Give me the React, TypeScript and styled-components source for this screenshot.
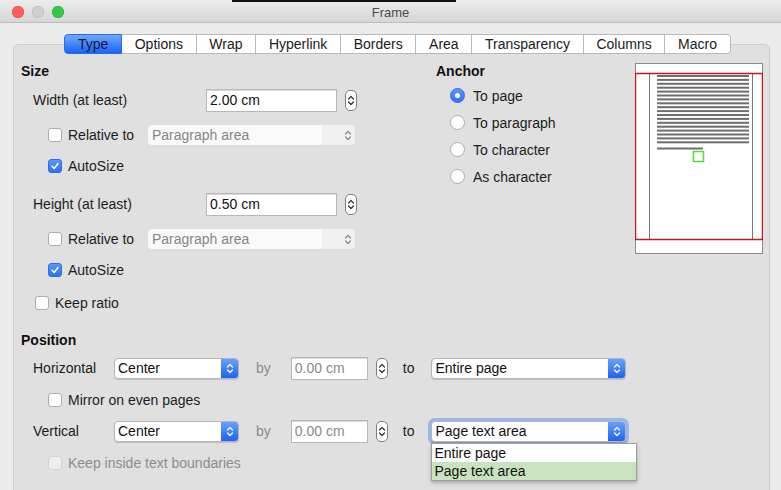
import React from "react";
import styled, { createGlobalStyle, css } from "styled-components";

const GlobalStyle = createGlobalStyle`
  html, body {
    margin: 0;
    padding: 0;
    background: #ffffff;
  }
  body {
    font-family: "Liberation Sans", Arial, sans-serif;
    font-size: 14px;
    color: #1c1c1c;
  }
`;

const Window = styled.div`
  position: relative;
  width: 781px;
  height: 490px;
  overflow: hidden;
  background: #ebebeb;
`;

const BackdropEdge = styled.div`
  position: absolute;
  top: 0;
  left: 232px;
  width: 224px;
  height: 2px;
  background: #111;
`;

const TitleBar = styled.div`
  display: grid;
  grid-template-columns: 1fr auto 1fr;
  align-items: center;
  height: 23px;
  padding: 1px 12px 0;
  border-bottom: 1px solid #bdbdbd;
  background: linear-gradient(#ececec, #d6d6d6);
  border-radius: 5px 5px 0 0;
  box-sizing: border-box;
`;

const Lights = styled.div`
  display: flex;
  gap: 8px;
`;

const Light = styled.span<{ $color: string; $border: string }>`
  width: 12px;
  height: 12px;
  border-radius: 50%;
  background: ${({ $color }) => $color};
  box-shadow: inset 0 0 0 0.5px ${({ $border }) => $border};
`;

const Title = styled.div`
  font-size: 13px;
  color: #4a4a4a;
  padding-top: 1px;
`;

const Body = styled.div`
  padding: 11px 11px 0 13px;
`;

const TabRow = styled.div`
  position: relative;
  z-index: 1;
  display: flex;
  justify-content: center;
  padding-left: 12px;
`;

const Tab = styled.div<{ $active?: boolean }>`
  height: 20px;
  line-height: 18px;
  padding: 0 12.7px;
  box-sizing: border-box;
  background: #ffffff;
  border: 1px solid #b9b9b9;
  border-left: none;
  color: #1a1a1a;
  &:first-child {
    border-left: 1px solid #b9b9b9;
    border-radius: 4px 0 0 4px;
  }
  &:last-child {
    border-radius: 0 4px 4px 0;
  }
  ${({ $active }) =>
    $active &&
    css`
      background: linear-gradient(#6fa9fd, #1c63f4);
      border-color: #2c6ae8 !important;
      color: #0d1a3a;
    `}
`;

const Panel = styled.div`
  margin-top: -10px;
  height: 480px;
  box-sizing: border-box;
  padding: 18px 0 0 7px;
  background: #e0e0e0;
  border: 1px solid #cdcdcd;
  border-radius: 5px;
`;

const TopGrid = styled.div`
  display: grid;
  grid-template-columns: 415px auto;
`;

const Column = styled.div`
  display: flex;
  flex-direction: column;
`;

const Header = styled.div<{ $mt?: number }>`
  height: 16px;
  line-height: 16px;
  font-weight: bold;
  color: #111;
  margin-top: ${({ $mt }) => $mt ?? 0}px;
`;

const Row = styled.div<{ $h: number; $indent: number }>`
  display: flex;
  align-items: center;
  height: ${({ $h }) => $h}px;
  padding-left: ${({ $indent }) => $indent}px;
`;

const Label = styled.span<{ $w?: number; $disabled?: boolean }>`
  display: inline-block;
  width: ${({ $w }) => ($w ? `${$w}px` : "auto")};
  flex-shrink: 0;
  color: ${({ $disabled }) => ($disabled ? "#8c8c8c" : "#1c1c1c")};
  white-space: nowrap;
`;

const SmallLabel = styled.span<{ $ml: number; $muted?: boolean }>`
  margin-left: ${({ $ml }) => $ml}px;
  color: ${({ $muted }) => ($muted ? "#8a8a8a" : "#1c1c1c")};
`;

const TextField = styled.div<{ $w: number; $disabled?: boolean }>`
  width: ${({ $w }) => $w}px;
  height: 23px;
  box-sizing: border-box;
  padding-left: 3px;
  line-height: 21px;
  background: #ffffff;
  border: 1px solid #b7b7b7;
  box-shadow: inset 0 1px 0 #d8d8d8;
  color: ${({ $disabled }) => ($disabled ? "#8a8a8a" : "#111")};
`;

const SpinBox = styled.div<{ $ml: number }>`
  margin-left: ${({ $ml }) => $ml}px;
  width: 12px;
  height: 21px;
  box-sizing: border-box;
  border: 1px solid #7d7d7d;
  border-radius: 5px;
  background: #fff;
  display: flex;
  align-items: center;
  justify-content: center;
`;

const Check = styled.span<{ $checked?: boolean; $disabled?: boolean }>`
  width: 14px;
  height: 14px;
  box-sizing: border-box;
  border-radius: 3px;
  flex-shrink: 0;
  margin-right: 6px;
  display: flex;
  align-items: center;
  justify-content: center;
  background: ${({ $checked, $disabled }) =>
    $checked ? "linear-gradient(#5a97fa, #2f73f3)" : $disabled ? "#eeeeee" : "#ffffff"};
  border: 1px solid
    ${({ $checked, $disabled }) => ($checked ? "#2f6ce6" : $disabled ? "#d2d2d2" : "#acacac")};
`;

const Radio = styled.span<{ $checked?: boolean }>`
  width: 15px;
  height: 15px;
  box-sizing: border-box;
  border-radius: 50%;
  flex-shrink: 0;
  margin-right: 8px;
  display: flex;
  align-items: center;
  justify-content: center;
  background: ${({ $checked }) => ($checked ? "linear-gradient(#5a97fa, #2f73f3)" : "#ffffff")};
  border: 1px solid ${({ $checked }) => ($checked ? "#2f6ce6" : "#acacac")};
  &::after {
    content: "";
    display: ${({ $checked }) => ($checked ? "block" : "none")};
    width: 5px;
    height: 5px;
    border-radius: 50%;
    background: #fff;
  }
`;

const FlatSelect = styled.div<{ $w: number }>`
  width: ${({ $w }) => $w}px;
  height: 20px;
  box-sizing: border-box;
  display: flex;
  align-items: center;
  justify-content: space-between;
  padding: 0 3px 0 4px;
  border-radius: 4px;
  background: linear-gradient(90deg, #fafafa 0, #fafafa 84%, #f0f0f0 84%);
  box-shadow: 0 0 0 1px #dedede;
  color: #858585;
`;

const SelectWrap = styled.div<{ $ml?: number }>`
  position: relative;
  margin-left: ${({ $ml }) => $ml ?? 0}px;
`;

const Select = styled.div<{ $w: number; $focus?: boolean }>`
  width: ${({ $w }) => $w}px;
  height: 21px;
  box-sizing: border-box;
  display: flex;
  align-items: stretch;
  border-radius: 4px;
  background: #fff;
  border: 1px solid #b5b5b5;
  box-shadow: 0 1px 1px rgba(0, 0, 0, 0.15)
    ${({ $focus }) => ($focus ? ", 0 0 0 3px rgba(92, 150, 240, 0.55)" : "")};
  overflow: hidden;
`;

const SelectValue = styled.span`
  flex: 1;
  padding-left: 3px;
  line-height: 18px;
  color: #111;
  white-space: nowrap;
`;

const SelectArrow = styled.span`
  width: 17px;
  background: linear-gradient(#65a2fc, #1e63f3);
  display: flex;
  align-items: center;
  justify-content: center;
`;

const Popup = styled.div`
  position: absolute;
  top: calc(100% + 1px);
  left: 0;
  width: 204px;
  background: #fff;
  border: 1px solid #9d9d9d;
  box-shadow: 0 2px 4px rgba(0, 0, 0, 0.25);
  z-index: 2;
`;

const PopupItem = styled.div<{ $selected?: boolean }>`
  height: 18px;
  line-height: 18px;
  padding-left: 2px;
  color: #111;
  background: ${({ $selected }) => ($selected ? "#cae3bf" : "#fff")};
`;

const AnchorCol = styled.div`
  width: 199px;
  display: flex;
  flex-direction: column;
`;

const RadioList = styled.div`
  margin-top: 3px;
`;

const RightSide = styled.div`
  display: flex;
  align-items: flex-start;
`;

const PreviewSvg = styled.svg`
  flex-shrink: 0;
  display: block;
`;

const Chevrons = ({ color = "#333" }: { color?: string }) => (
  <svg width={8} height={13} viewBox="0 0 8 13" fill="none">
    <path d="M1.5 5 L4 2.5 L6.5 5" stroke={color} strokeWidth="1.2" strokeLinecap="round" strokeLinejoin="round" />
    <path d="M1.5 8 L4 10.5 L6.5 8" stroke={color} strokeWidth="1.2" strokeLinecap="round" strokeLinejoin="round" />
  </svg>
);

const Tick = () => (
  <svg width="10" height="10" viewBox="0 0 10 10" fill="none">
    <path d="M2 5.2 L4.2 7.5 L8 2.5" stroke="#fff" strokeWidth="1.4" strokeLinecap="round" strokeLinejoin="round" />
  </svg>
);

const CheckItem = ({
  label,
  checked,
  disabled,
  indent,
  h,
  children,
  labelWidth,
}: {
  label: string;
  checked?: boolean;
  disabled?: boolean;
  indent: number;
  h: number;
  labelWidth?: number;
  children?: React.ReactNode;
}) => (
  <Row $h={h} $indent={indent}>
    <Check $checked={checked} $disabled={disabled}>
      {checked && <Tick />}
    </Check>
    <Label $w={labelWidth} $disabled={disabled}>
      {label}
    </Label>
    {children}
  </Row>
);

const BlueSelect = ({
  value,
  w,
  ml,
  focus,
  children,
}: {
  value: string;
  w: number;
  ml?: number;
  focus?: boolean;
  children?: React.ReactNode;
}) => (
  <SelectWrap $ml={ml}>
    <Select $w={w} $focus={focus}>
      <SelectValue>{value}</SelectValue>
      <SelectArrow>
        <Chevrons color="#fff" />
      </SelectArrow>
    </Select>
    {children}
  </SelectWrap>
);

const textLines = Array.from({ length: 18 }, (_, i) => 12 + i * 3.9);

// page preview: frame border, red page margins, text lines, green frame box
const PagePreview = () => (
  <PreviewSvg width="128" height="192" viewBox="0 0 128 192">
    <rect x="0.5" y="0.5" width="127" height="190" fill="#fff" stroke="#8a8a8a" />
    <line x1="14.5" y1="10" x2="14.5" y2="176" stroke="#777" />
    <line x1="117.5" y1="10" x2="117.5" y2="176" stroke="#777" />
    {textLines.map((y) => (
      <rect key={y} x="22" y={y} width="92" height="2" fill="#6e6e6e" />
    ))}
    <rect x="22" y="84.5" width="46" height="2" fill="#6e6e6e" />
    <line x1="0" y1="10.5" x2="128" y2="10.5" stroke="#c8171c" strokeWidth="1.3" />
    <line x1="0" y1="176.5" x2="128" y2="176.5" stroke="#c8171c" strokeWidth="1.3" />
    <line x1="0.6" y1="10" x2="0.6" y2="177" stroke="#c8171c" strokeWidth="1.3" />
    <line x1="127.4" y1="10" x2="127.4" y2="177" stroke="#c8171c" strokeWidth="1.3" />
    <rect x="58.5" y="88.5" width="10" height="10" fill="none" stroke="#5fd83a" strokeWidth="1.5" />
  </PreviewSvg>
);

const tabs = ["Type", "Options", "Wrap", "Hyperlink", "Borders", "Area", "Transparency", "Columns", "Macro"];
const anchors = ["To page", "To paragraph", "To character", "As character"];

export default function App() {
  return (
    <>
      <GlobalStyle />
      <Window>
        <TitleBar>
          <Lights>
            <Light $color="#fc5f57" $border="#de4841" />
            <Light $color="#d0d0d0" $border="#b8b8b8" />
            <Light $color="#33c748" $border="#27aa35" />
          </Lights>
          <Title>Frame</Title>
          <span />
        </TitleBar>

        <Body>
          <TabRow>
            {tabs.map((t, i) => (
              <Tab key={t} $active={i === 0}>
                {t}
              </Tab>
            ))}
          </TabRow>

          <Panel>
            <TopGrid>
              {/* Size */}
              <Column>
                <Header>Size</Header>
                <Row $h={42} $indent={12}>
                  <Label $w={173}>Width (at least)</Label>
                  <TextField $w={131}>2.00 cm</TextField>
                  <SpinBox $ml={8}>
                    <Chevrons />
                  </SpinBox>
                </Row>
                <CheckItem label="Relative to" indent={27} h={28} labelWidth={80}>
                  <FlatSelect $w={207}>
                    <span>Paragraph area</span>
                    <Chevrons color="#8a8a8a" />
                  </FlatSelect>
                </CheckItem>
                <CheckItem label="AutoSize" checked indent={27} h={34} />
                <Row $h={42} $indent={12}>
                  <Label $w={173}>Height (at least)</Label>
                  <TextField $w={131}>0.50 cm</TextField>
                  <SpinBox $ml={8}>
                    <Chevrons />
                  </SpinBox>
                </Row>
                <CheckItem label="Relative to" indent={27} h={28} labelWidth={80}>
                  <FlatSelect $w={207}>
                    <span>Paragraph area</span>
                    <Chevrons color="#8a8a8a" />
                  </FlatSelect>
                </CheckItem>
                <CheckItem label="AutoSize" checked indent={27} h={34} />
                <CheckItem label="Keep ratio" indent={14} h={32} />
              </Column>

              {/* Anchor + preview */}
              <RightSide>
                <AnchorCol>
                  <Header>Anchor</Header>
                  <RadioList>
                    {anchors.map((a, i) => (
                      <Row key={a} $h={27} $indent={14}>
                        <Radio $checked={i === 0} />
                        <Label>{a}</Label>
                      </Row>
                    ))}
                  </RadioList>
                </AnchorCol>
                <PagePreview />
              </RightSide>
            </TopGrid>

            {/* Position */}
            <Column>
              <Header $mt={13}>Position</Header>
              <Row $h={40} $indent={12}>
                <Label $w={81}>Horizontal</Label>
                <BlueSelect value="Center" w={125} />
                <SmallLabel $ml={17} $muted>by</SmallLabel>
                <SelectWrap $ml={20}>
                  <TextField $w={77} $disabled>0.00 cm</TextField>
                </SelectWrap>
                <SpinBox $ml={8}>
                  <Chevrons />
                </SpinBox>
                <SmallLabel $ml={15}>to</SmallLabel>
                <BlueSelect value="Entire page" w={195} ml={17} />
              </Row>
              <CheckItem label="Mirror on even pages" indent={27} h={24} />
              <Row $h={38} $indent={12}>
                <Label $w={81}>Vertical</Label>
                <BlueSelect value="Center" w={125} />
                <SmallLabel $ml={17} $muted>by</SmallLabel>
                <SelectWrap $ml={20}>
                  <TextField $w={77} $disabled>0.00 cm</TextField>
                </SelectWrap>
                <SpinBox $ml={8}>
                  <Chevrons />
                </SpinBox>
                <SmallLabel $ml={15}>to</SmallLabel>
                <BlueSelect value="Page text area" w={195} ml={17} focus>
                  <Popup>
                    <PopupItem>Entire page</PopupItem>
                    <PopupItem $selected>Page text area</PopupItem>
                  </Popup>
                </BlueSelect>
              </Row>
              <CheckItem label="Keep inside text boundaries" disabled indent={27} h={26} />
            </Column>
          </Panel>
        </Body>
        <BackdropEdge />
      </Window>
    </>
  );
}
